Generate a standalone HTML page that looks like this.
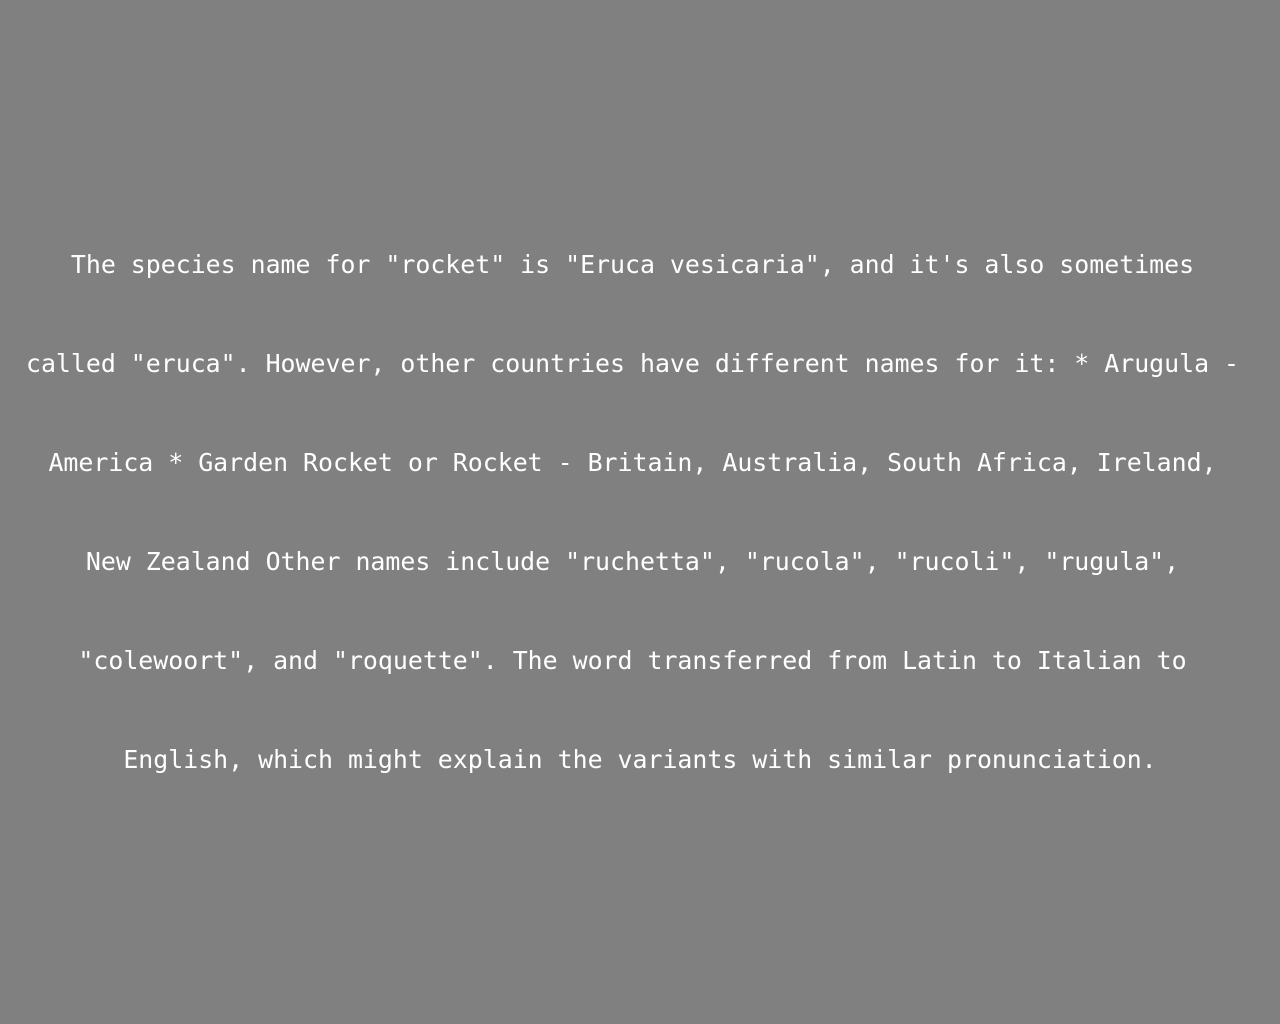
<!DOCTYPE html>
<html><head><meta charset="utf-8"><style>
html,body{margin:0;padding:0;background:#808080;width:1280px;height:1024px;overflow:hidden}
.w{position:absolute;top:0;left:0;width:1280px;height:1024px;display:flex;align-items:center;justify-content:center}
p{margin:0;font-family:"DejaVu Sans Mono","Liberation Mono",monospace;font-size:24.88px;line-height:99px;color:#fff;text-align:center;white-space:pre}
</style></head><body><div class="w"><p>The species name for "rocket" is "Eruca vesicaria", and it's also sometimes 
called "eruca". However, other countries have different names for it: * Arugula - 
America * Garden Rocket or Rocket - Britain, Australia, South Africa, Ireland, 
New Zealand Other names include "ruchetta", "rucola", "rucoli", "rugula", 
"colewoort", and "roquette". The word transferred from Latin to Italian to 
English, which might explain the variants with similar pronunciation.</p></div></body></html>
